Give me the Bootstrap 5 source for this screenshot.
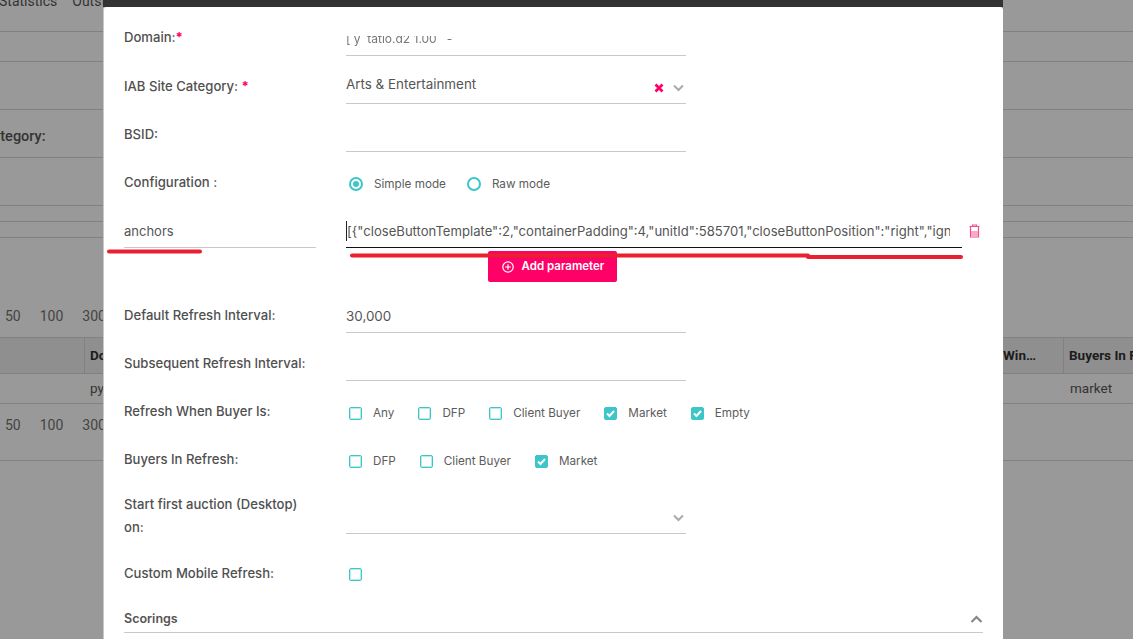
<!DOCTYPE html>
<html lang="en">
<head>
    <meta charset="UTF-8">
    <title>Edit Site</title>
    <link href="https://cdn.jsdelivr.net/npm/bootstrap@5.3.0/dist/css/bootstrap.min.css" rel="stylesheet">
    <style>
        html, body { height: 639px; overflow: hidden; }
        body { background: #999; color: #3a3a3a; font-family: "Inter", "Liberation Sans", sans-serif; font-size: 13px; }

        /* page behind the dialog */
        .back-line { border-bottom: 1px solid #818181; font-family: "Roboto", "Liberation Sans", sans-serif; font-size: 13.5px; color: #333; white-space: nowrap; overflow: hidden; }
        .back-nav { height: 32px; line-height: 3px; gap: 15px; padding-left: 0; font-size: 14px; }
        .nav-first { margin-left: -1px; }
        .h-30 { height: 30px; }
        .h-48 { height: 48px; }
        .h-16 { height: 16px; }
        .back-cat { font-weight: 500; font-size: 14.5px; }
        .back-cat span { margin-left: -17px; margin-top: 6px; }
        .back-gap { height: 99px; padding-bottom: 10px; border-bottom: 0; }
        .back-head { height: 37px; background: #8f8f8f; font-weight: 700; color: #1c1c1c; border-top: 1px solid #818181; }
        .back-cell { height: 100%; display: flex; align-items: center; overflow: hidden; flex-shrink: 0; }
        .cell-a { width: 85px; border-right: 1px solid #818181; }
        .cell-b { width: 916px; padding-left: 5px; }
        .cell-c { width: 63px; padding-left: 2px; border-right: 1px solid #818181; }
        .cell-d { padding-left: 5px; }
        .back-row { height: 30px; }
        .back-py { width: 980px; margin-left: 90px; flex-shrink: 0; }
        .back-pager { height: 57px; padding-bottom: 14px; }
        .pager { color: #444; gap: 19px; padding-left: 5px; font-size: 14px; }

        /* dialog */
        .dialog-wrap { position: absolute; left: 103px; top: 0; width: 900px; height: 639px; overflow: hidden; }
        .dialog-top { height: 7px; background: #333; }
        .dialog-body { background: #fff; height: 640px; border-left: 1px solid #c8c8c8; border-radius: 3px 3px 0 0; padding-left: 20px; padding-right: 20px; }
        .field-row { display: flex; height: 48px; }
        .field-row.row-first { height: 49px; }
        .field-row.row-tall { height: 57px; }
        .field-row.row-custom { height: 67px; }
        .field-label { width: 222px; padding-top: 20px; line-height: 20px; font-weight: 500; color: #505050; flex-shrink: 0; font-size: 13.1px; }
        .label-two { padding-top: 16px; line-height: 23px; padding-right: 30px; }
        .label-custom { padding-top: 29px; }
        .req { color: #ff0066; font-weight: 700; }
        .field-value { width: 340px; height: 48px; border-bottom: 1px solid #c9c9c9; padding-top: 18px; line-height: 20px; position: relative; color: #555; font-size: 13.4px; }
        .field-plain { border-bottom: 0; padding-top: 22px; }
        .value-first { height: 49px; padding-top: 29px; }
        .value-num { padding-top: 21px; }
        .value-wide { width: 460px; }
        .value-tall { height: 57px; }
        .value-custom { padding-top: 30px; }
        .domain-text { display: block; height: 12px; overflow: hidden; line-height: 5px; color: #777; font-size: 12px; filter: blur(.5px); }

        .opt-group { display: flex; align-items: center; height: 20px; padding-left: 3px; font-size: 11.7px; color: #5c5c5c; }
        .opt-label { margin-left: 11px; margin-right: 24px; }
        .opt-wide .opt-label { margin-right: 21px; }
        .tick { width: 13px; height: 13px; border: 1px solid #3cc6c8; box-shadow: inset 0 0 0 1px rgba(60, 198, 200, .35); border-radius: 2px; flex-shrink: 0; display: flex; align-items: center; justify-content: center; background: #fff; }
        .tick.on { background: #3cc6c8; }
        .tick svg { width: 11px; height: 11px; }
        .dot { width: 14px; height: 14px; border: 2px solid #3cc6c8; border-radius: 50%; flex-shrink: 0; display: flex; align-items: center; justify-content: center; }
        .dot.on::after { content: ""; width: 6px; height: 6px; border-radius: 50%; background: #3cc6c8; }

        .icon-x { position: absolute; left: 308px; top: 27px; }
        .icon-down { position: absolute; left: 327px; top: 28px; }
        .icon-down-low { position: absolute; left: 327px; top: 37px; }

        .param-name { width: 192px; height: 48px; border-bottom: 1px solid #c9c9c9; padding-top: 21px; line-height: 20px; color: #555; margin-right: 30px; flex-shrink: 0; }
        .param-value { width: 616px; height: 48px; border-bottom: 1px solid #111; padding-top: 21px; line-height: 20px; color: #555; flex-shrink: 0; }
        .param-text { display: block; width: 604px; overflow: hidden; white-space: nowrap; border-left: 1px solid #222; font-size: 13.1px; }
        .trash-btn { margin-left: 6px; margin-top: 24px; width: 13px; height: 14px; flex-shrink: 0; }
        .add-wrap { height: 37px; padding-top: 3px; padding-left: 364px; }
        .add-btn { background: #ff0066; color: #fff; border: 0; border-radius: 2px; width: 129px; height: 31px; font-size: 11.5px; font-weight: 600; padding: 1px 0 0 1px; gap: 8px; }
        .add-btn:hover { background: #ff0066; color: #fff; }
        .scorings { height: 32px; width: 859px; border-bottom: 1px solid #c9c9c9; font-weight: 600; color: #555; font-size: 12.5px; padding-top: 6px; }

        /* hand drawn marks on top of the screenshot */
        .marks { position: absolute; left: 0; top: 0; pointer-events: none; }
    </style>
</head>
<body>

<div>
    <div class="back-line back-nav d-flex"><span class="nav-first">Statistics</span><span>Outstanding</span></div>
    <div class="back-line h-30"></div>
    <div class="back-line h-48"></div>
    <div class="back-line h-48 back-cat d-flex align-items-center"><span>Category:</span></div>
    <div class="back-line h-48"></div>
    <div class="back-line h-16"></div>
    <div class="back-line h-16"></div>
    <div class="back-line back-gap d-flex pager align-items-end"><span>50</span><span>100</span><span>300</span></div>
    <div class="back-line back-head d-flex">
        <div class="back-cell cell-a"></div>
        <div class="back-cell cell-b">Domain</div>
        <div class="back-cell cell-c">Win…</div>
        <div class="back-cell cell-d">Buyers In Refresh</div>
    </div>
    <div class="back-line back-row d-flex align-items-center">
        <span class="back-py">py</span><span>market</span>
    </div>
    <div class="back-line back-pager d-flex pager align-items-center"><span>50</span><span>100</span><span>300</span></div>
</div>

<div class="dialog-wrap">
    <div class="dialog-top"></div>
    <div class="dialog-body">
        <div class="field-row row-first">
            <div class="field-label">Domain:<span class="req">*</span></div>
            <div class="field-value value-first"><span class="domain-text">[ y &nbsp;tatio.d2 1.00 &nbsp; -</span></div>
        </div>
        <div class="field-row">
            <div class="field-label">IAB Site Category: <span class="req">*</span></div>
            <div class="field-value">
                Arts &amp; Entertainment
                <svg class="icon-x" width="10" height="10" viewBox="0 0 10 10"><path d="M1.5 1.5l7 7M8.5 1.5l-7 7" stroke="#ff0066" stroke-width="2.8"/></svg>
                <svg class="icon-down" width="11" height="8" viewBox="0 0 11 8"><path d="M1 1.5l4.5 4.5L10 1.5" fill="none" stroke="#aaa" stroke-width="2"/></svg>
            </div>
        </div>
        <div class="field-row">
            <div class="field-label">BSID:</div>
            <div class="field-value"></div>
        </div>
        <div class="field-row">
            <div class="field-label">Configuration :</div>
            <div class="field-value field-plain">
                <div class="opt-group opt-wide"><span class="dot on"></span><span class="opt-label">Simple mode</span><span class="dot"></span><span class="opt-label">Raw mode</span></div>
            </div>
        </div>
        <div class="field-row">
            <div class="param-name">anchors</div>
            <div class="param-value"><span class="param-text">[{"closeButtonTemplate":2,"containerPadding":4,"unitId":585701,"closeButtonPosition":"right","ignoreClose":false}]</span></div>
            <svg class="trash-btn" viewBox="0 0 13 14"><path d="M4.5 2V1h4v1M1.5 2.5h10M2.5 2.5v10.5h8V2.5" fill="none" stroke="#f0508c" stroke-width="1.2"/><path d="M3 7h7v5.5H3z" fill="#f9a8c6"/></svg>
        </div>
        <div class="add-wrap">
            <button type="button" class="btn add-btn d-inline-flex align-items-center justify-content-center">
                <svg width="12" height="12" viewBox="0 0 12 12"><circle cx="6" cy="6" r="5.2" fill="none" stroke="#fff" stroke-width="1.2"/><path d="M3.2 6h5.6M6 3.2v5.6" stroke="#fff" stroke-width="1.2"/></svg>
                Add parameter
            </button>
        </div>
        <div class="field-row">
            <div class="field-label">Default Refresh Interval:</div>
            <div class="field-value value-num">30,000</div>
        </div>
        <div class="field-row">
            <div class="field-label">Subsequent Refresh Interval:</div>
            <div class="field-value"></div>
        </div>
        <div class="field-row">
            <div class="field-label">Refresh When Buyer Is:</div>
            <div class="field-value field-plain value-wide">
                <div class="opt-group">
                    <span class="tick"></span><span class="opt-label">Any</span>
                    <span class="tick"></span><span class="opt-label">DFP</span>
                    <span class="tick"></span><span class="opt-label">Client Buyer</span>
                    <span class="tick on"><svg viewBox="0 0 11 11"><path d="M2 5.5l2.5 2.5L9 3" fill="none" stroke="#fff" stroke-width="2"/></svg></span><span class="opt-label">Market</span>
                    <span class="tick on"><svg viewBox="0 0 11 11"><path d="M2 5.5l2.5 2.5L9 3" fill="none" stroke="#fff" stroke-width="2"/></svg></span><span class="opt-label">Empty</span>
                </div>
            </div>
        </div>
        <div class="field-row">
            <div class="field-label">Buyers In Refresh:</div>
            <div class="field-value field-plain">
                <div class="opt-group">
                    <span class="tick"></span><span class="opt-label">DFP</span>
                    <span class="tick"></span><span class="opt-label">Client Buyer</span>
                    <span class="tick on"><svg viewBox="0 0 11 11"><path d="M2 5.5l2.5 2.5L9 3" fill="none" stroke="#fff" stroke-width="2"/></svg></span><span class="opt-label">Market</span>
                </div>
            </div>
        </div>
        <div class="field-row row-tall">
            <div class="field-label label-two">Start first auction (Desktop) on:</div>
            <div class="field-value value-tall">
                <svg class="icon-down-low" width="11" height="8" viewBox="0 0 11 8"><path d="M1 1.5l4.5 4.5L10 1.5" fill="none" stroke="#aaa" stroke-width="2"/></svg>
            </div>
        </div>
        <div class="field-row row-custom">
            <div class="field-label label-custom">Custom Mobile Refresh:</div>
            <div class="field-value field-plain value-custom">
                <div class="opt-group"><span class="tick"></span></div>
            </div>
        </div>
        <div class="scorings d-flex justify-content-between align-items-center">
            <span>Scorings</span>
            <svg width="13" height="9" viewBox="0 0 13 9"><path d="M1.5 7l5-5 5 5" fill="none" stroke="#888" stroke-width="2.2"/></svg>
        </div>
    </div>
</div>

<svg class="marks" width="1133" height="639" viewBox="0 0 1133 639">
    <path d="M109 251.5H200" stroke="#e8202f" stroke-width="4" stroke-linecap="round"/>
    <path d="M352 255.5H808" stroke="#e8202f" stroke-width="4" stroke-linecap="round"/>
    <path d="M808 257H961" stroke="#e8202f" stroke-width="4" stroke-linecap="round"/>
</svg>

<script src="https://cdn.jsdelivr.net/npm/bootstrap@5.3.0/dist/js/bootstrap.bundle.min.js"></script>
</body>
</html>
